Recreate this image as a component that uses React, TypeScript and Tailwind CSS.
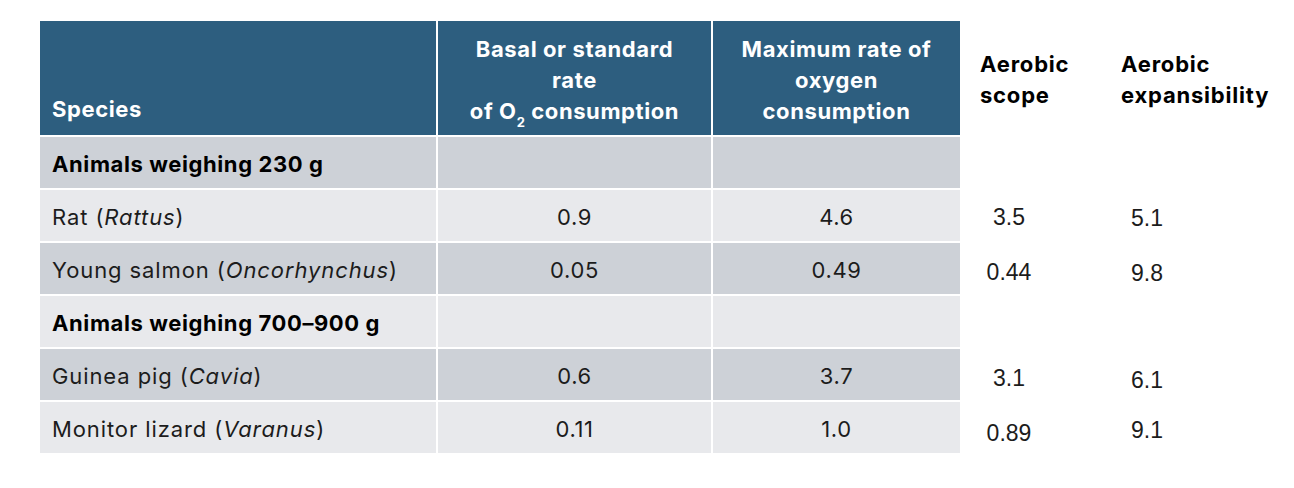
import React from 'react';

type Row = {
  label: React.ReactNode;
  basal?: string;
  max?: string;
  scope?: string;
  exp?: string;
  group?: boolean;
  shade: 'dark' | 'light';
};

const rows: Row[] = [
  { label: 'Animals weighing 230 g', group: true, shade: 'dark' },
  { label: <>Rat (<i>Rattus</i>)</>, basal: '0.9', max: '4.6', scope: '3.5', exp: '5.1', shade: 'light' },
  { label: <>Young salmon (<i>Oncorhynchus</i>)</>, basal: '0.05', max: '0.49', scope: '0.44', exp: '9.8', shade: 'dark' },
  { label: 'Animals weighing 700–900 g', group: true, shade: 'light' },
  { label: <>Guinea pig (<i>Cavia</i>)</>, basal: '0.6', max: '3.7', scope: '3.1', exp: '6.1', shade: 'dark' },
  { label: <>Monitor lizard (<i>Varanus</i>)</>, basal: '0.11', max: '1.0', scope: '0.89', exp: '9.1', shade: 'light' },
];

// small nudges: the outside numbers sit a bit lower than the table rows
const scopeNudge = ['', 'pt-[4px]', 'pt-[8px]', '', 'pt-[8px]', 'pt-[12px]'];
const expNudge = ['', 'pt-[6px]', 'pt-[10px]', '', 'pt-[12px]', 'pt-[6px]'];

const App: React.FC = () => {
  return (
    <div className="w-[1294px] h-[488px] bg-white text-[#1c1c1c] font-['Inter',sans-serif]">
      <div className="flex pt-[21px] pl-[40px]">
        {/* Table */}
        <div className="grid grid-cols-[396px_273px_247px] gap-[2px] bg-white">
          <div className="h-[114px] bg-[#2d5e7f] text-white font-bold text-[22px] tracking-[0.6px] flex items-end px-[12px] pb-[9px]">
            Species
          </div>
          <div className="h-[114px] bg-[#2d5e7f] text-white font-bold text-[22px] tracking-[0.6px] leading-[31px] flex flex-col items-center justify-end pb-[8px] text-center">
            <span>Basal or standard</span>
            <span>rate</span>
            <span>
              of O<sub className="text-[13px] align-[-5px] leading-none">2</sub> consumption
            </span>
          </div>
          <div className="h-[114px] bg-[#2d5e7f] text-white font-bold text-[22px] tracking-[0.6px] leading-[31px] flex flex-col items-center justify-end pb-[8px] text-center">
            <span>Maximum rate of</span>
            <span>oxygen</span>
            <span>consumption</span>
          </div>

          {rows.map((r, i) => {
            const bg = r.shade === 'dark' ? 'bg-[#cdd1d7]' : 'bg-[#e8e9ec]';
            return (
              <React.Fragment key={i}>
                <div className={`h-[51px] ${bg} flex items-center px-[12px] pt-[4px] text-[22px] ${r.group ? 'font-bold text-black tracking-[0.6px]' : 'tracking-[0.9px]'}`}>
                  {r.label}
                </div>
                <div className={`h-[51px] ${bg} flex items-center justify-center pt-[4px] text-[22px] tracking-[0.6px]`}>
                  {r.basal}
                </div>
                <div className={`h-[51px] ${bg} flex items-center justify-center pt-[4px] text-[22px] tracking-[0.6px]`}>
                  {r.max}
                </div>
              </React.Fragment>
            );
          })}
        </div>

        {/* Outside columns */}
        <div className="ml-[20px] w-[141px] flex flex-col gap-[2px]">
          <div className="h-[114px] pt-[28px] font-bold text-[22px] tracking-[0.8px] leading-[31px] text-black">
            <div>Aerobic</div>
            <div>scope</div>
          </div>
          {rows.map((r, i) => (
            <div key={i} className={`h-[51px] w-[58px] flex items-center justify-center text-[23px] font-['Liberation_Sans',sans-serif] ${scopeNudge[i]}`}>
              {r.scope}
            </div>
          ))}
        </div>
        <div className="w-[170px] flex flex-col gap-[2px]">
          <div className="h-[114px] pt-[28px] font-bold text-[22px] tracking-[0.8px] leading-[31px] text-black">
            <div>Aerobic</div>
            <div>expansibility</div>
          </div>
          {rows.map((r, i) => (
            <div key={i} className={`h-[51px] w-[52px] flex items-center justify-center text-[23px] font-['Liberation_Sans',sans-serif] ${expNudge[i]}`}>
              {r.exp}
            </div>
          ))}
        </div>
      </div>
    </div>
  );
};

export default App;
